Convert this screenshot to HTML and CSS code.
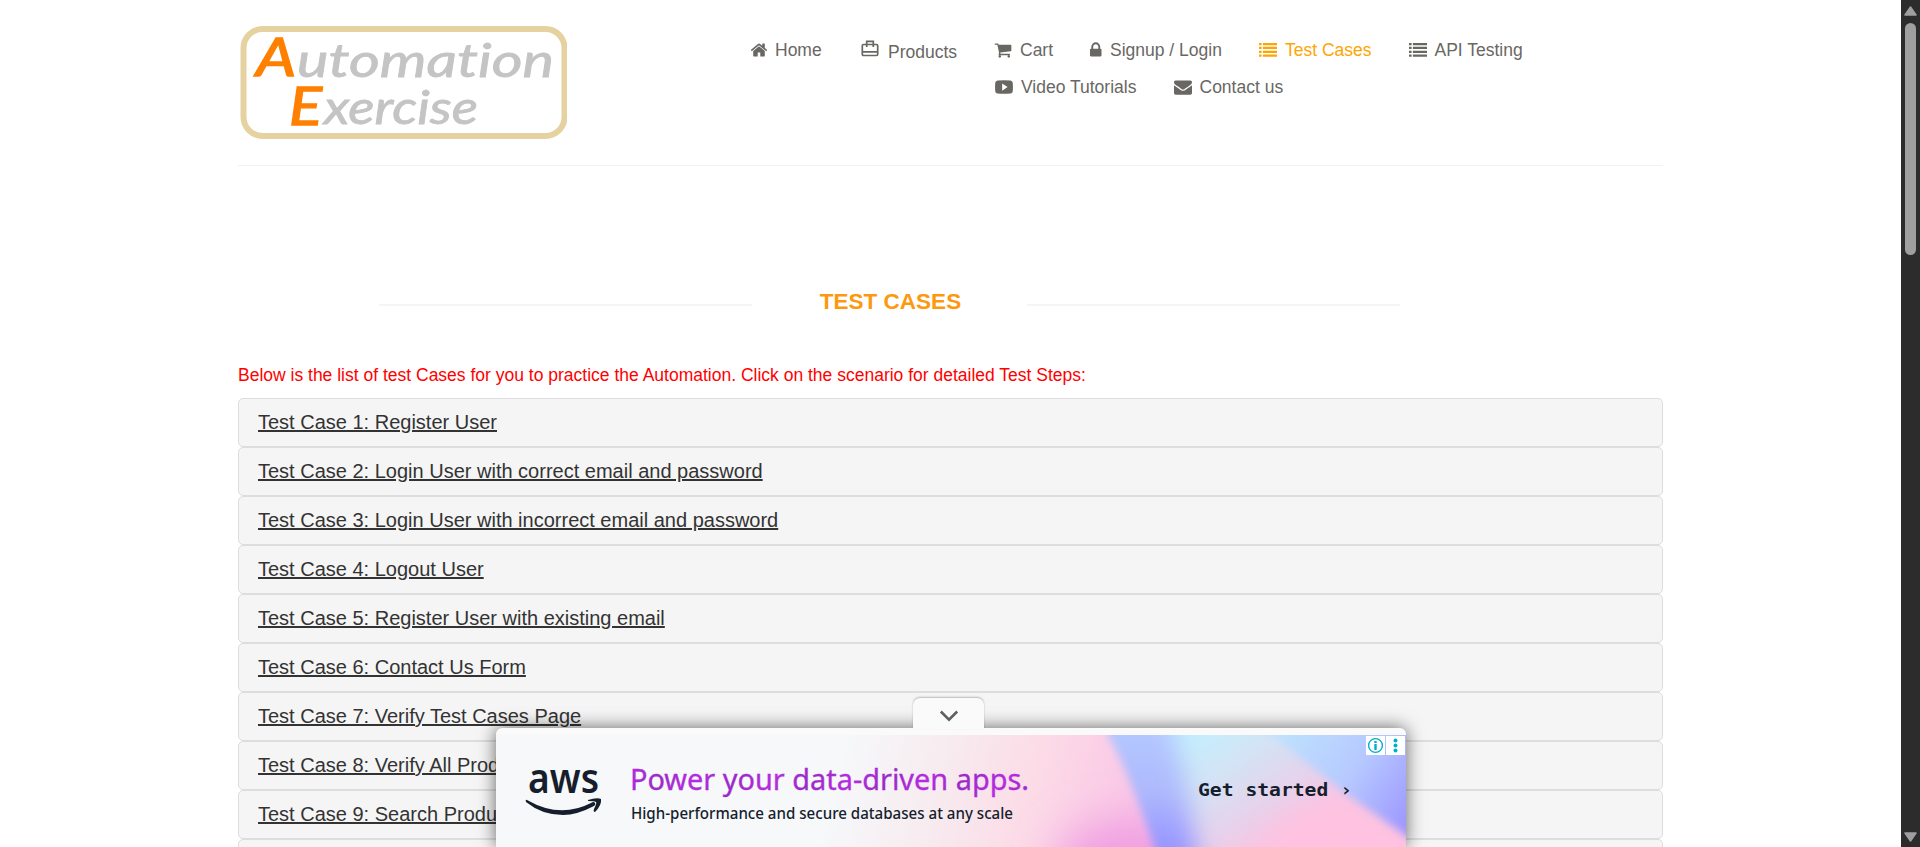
FILE: index.html
```html
<!DOCTYPE html>
<html lang="en">
<head>
<meta charset="utf-8">
<title>Automation Exercise - Test Cases</title>
<link rel="stylesheet" href="styles.css">
</head>
<body>
<svg width="0" height="0" class="defs">
  <symbol id="list" viewBox="0 0 1792 1792"><path d="M0 192h256v224H0zM0 576h256v224H0zM0 960h256v224H0zM0 1344h256v224H0zM384 192h1408v224H384zM384 576h1408v224H384zM384 960h1408v224H384zM384 1344h1408v224H384z"/></symbol>
</svg>
<div class="page">
  <div class="container">
    <header class="header">
      <svg class="logo" width="329" height="120" viewBox="0 0 329 120">
        <rect x="5.500" y="9" width="321" height="107" rx="19" fill="#fff" stroke="#e6d2a0" stroke-width="6"/>
        <g class="logo-text">
          <text class="cap" x="18" y="56" font-size="52" textLength="40" lengthAdjust="spacingAndGlyphs">A</text>
          <text x="59" y="57" font-size="47" textLength="257" lengthAdjust="spacingAndGlyphs">utomation</text>
          <text class="cap" x="51" y="105" font-size="52" textLength="33" lengthAdjust="spacingAndGlyphs">E</text>
          <text x="86" y="104" font-size="47" textLength="154" lengthAdjust="spacingAndGlyphs">xercise</text>
        </g>
      </svg>
      <nav class="nav">
        <ul class="row">
          <li class="home"><svg class="ico" viewBox="0 0 1792 1792"><path d="M1472 992v480q0 26-19 45t-45 19h-384v-384h-256v384h-384q-26 0-45-19t-19-45v-480q0-1 .5-3t.5-3l575-474 575 474q1 2 1 6zm223-69l-62 74q-8 9-21 11h-3q-13 0-21-7l-692-577-692 577q-12 8-24 7-13-2-21-11l-62-74q-8-10-7-23.500t11-21.500l719-599q32-26 76-26t76 26l244 204v-195q0-14 9-23t23-9h192q14 0 23 9t9 23v408l219 182q10 8 11 21.500t-7 23.500z"/></svg><span>Home</span></li>
          <li class="products"><svg class="bag" width="18" height="17" viewBox="0 0 18 17"><path d="M2.500 4.500h13q1.200 0 1.200 1.200v8.600q0 1.200-1.200 1.200h-13q-1.200 0-1.200-1.200V5.700q0-1.200 1.200-1.200zM1.300 11.800h15.400M5.700 7V1.300h6.600V7" fill="none" stroke="#696763" stroke-width="1.700"/></svg><span>Products</span></li>
          <li class="cart"><svg class="ico" viewBox="0 0 1792 1792"><path d="M704 1536q0 52-38 90t-90 38-90-38-38-90 38-90 90-38 90 38 38 90zm896 0q0 52-38 90t-90 38-90-38-38-90 38-90 90-38 90 38 38 90zm128-1088v512q0 24-16.500 42.500t-40.500 21.500l-1044 122q13 60 13 70 0 16-24 64h920q26 0 45 19t19 45-19 45-45 19h-1024q-26 0-45-19t-19-45q0-11 8-31.500t16-36 21.500-40 15.500-29.500l-177-823h-204q-26 0-45-19t-19-45 19-45 45-19h256q16 0 28.500 6.500t19.500 15.500 13 24.500 8 26 5.500 29.500 4.500 26h1201q26 0 45 19t19 45z"/></svg><span>Cart</span></li>
          <li class="login"><svg class="ico lock" viewBox="320 0 1152 1792"><path d="M640 768h512v-192q0-106-75-181t-181-75-181 75-75 181v192zm832 96v576q0 40-28 68t-68 28h-960q-40 0-68-28t-28-68v-576q0-40 28-68t68-28h32v-192q0-184 132-316t316-132 316 132 132 316v192h32q40 0 68 28t28 68z"/></svg><span>Signup / Login</span></li>
          <li class="cases"><svg class="ico"><use href="#list"/></svg><span>Test Cases</span></li>
          <li class="api"><svg class="ico"><use href="#list"/></svg><span>API Testing</span></li>
        </ul>
        <ul class="row second">
          <li class="video"><svg class="ico" viewBox="0 0 1792 1792"><path fill-rule="evenodd" d="M260 250Q896 200 1532 250Q1740 270 1765 480Q1810 896 1765 1312Q1740 1522 1532 1542Q896 1592 260 1542Q52 1522 27 1312Q-18 896 27 480Q52 270 260 250zM711 540v720l540-360z"/></svg><span>Video Tutorials</span></li>
          <li class="contact"><svg class="ico" viewBox="0 0 1792 1792"><path d="M1792 710v794q0 66-47 113t-113 47h-1472q-66 0-113-47t-47-113v-794q44 49 101 87 362 246 497 345 57 42 92.500 65.500t94.500 48 110 24.500h2q51 0 110-24.500t94.500-48 92.500-65.500q170-123 498-345 57-39 100-87zm0-294q0 79-49 151t-122 123q-376 261-468 325-10 7-42.500 31t-54 38.500-52 32.500-57.500 27-50 9h-2q-23 0-50-9t-57.500-27-52-32.500-54-38.500-42.500-31q-91-64-262-182.500t-205-142.500q-62-42-117-115.500t-55-136.500q0-78 41.500-130t118.500-52h1472q65 0 112.500 47t47.500 113z"/></svg><span>Contact us</span></li>
        </ul>
      </nav>
    </header>
    <div class="title"><i></i><h2>TEST CASES</h2><i></i></div>
    <p class="intro">Below is the list of test Cases for you to practice the Automation. Click on the scenario for detailed Test Steps:</p>
    <div class="panels">
      <div class="panel"><u>Test Case 1: Register User</u></div>
      <div class="panel"><u>Test Case 2: Login User with correct email and password</u></div>
      <div class="panel"><u>Test Case 3: Login User with incorrect email and password</u></div>
      <div class="panel"><u>Test Case 4: Logout User</u></div>
      <div class="panel"><u>Test Case 5: Register User with existing email</u></div>
      <div class="panel"><u>Test Case 6: Contact Us Form</u></div>
      <div class="panel"><u>Test Case 7: Verify Test Cases Page</u></div>
      <div class="panel"><u>Test Case 8: Verify All Products</u></div>
      <div class="panel"><u>Test Case 9: Search Product</u></div>
      <div class="panel"></div>
    </div>
  </div>
</div>

<aside class="ad">
  <div class="tab"><svg width="20" height="12" viewBox="0 0 20 12"><path d="M1.800 1.500L10 9.700l8.200-8.200" fill="none" stroke="#5f5f5f" stroke-width="2.600"/></svg></div>
  <svg class="banner" width="910" height="112" viewBox="0 0 910 112">
    <defs>
      <linearGradient id="base" gradientUnits="userSpaceOnUse" x1="350" y1="0" x2="640" y2="70">
        <stop offset="0" stop-color="#f6f8fa"/><stop offset=".35" stop-color="#f7ebef"/><stop offset=".65" stop-color="#fcdbe7"/><stop offset="1" stop-color="#fac6e6"/>
      </linearGradient>
      <linearGradient id="band" x1="0" y1="0" x2="0" y2="1"><stop offset=".1" stop-color="#b4c8ff"/><stop offset=".5" stop-color="#aeb9fd"/><stop offset=".85" stop-color="#9a98ff"/></linearGradient>
      <linearGradient id="ice" gradientUnits="userSpaceOnUse" x1="700" y1="0" x2="775" y2="110"><stop offset="0" stop-color="#c4effc"/><stop offset=".4" stop-color="#d6e1f4"/><stop offset=".75" stop-color="#e8d0ea"/><stop offset="1" stop-color="#fcc3e1"/></linearGradient>
      <linearGradient id="sky" gradientUnits="userSpaceOnUse" x1="780" y1="0" x2="915" y2="95"><stop offset="0" stop-color="#bfe2fd"/><stop offset=".5" stop-color="#b6caff"/><stop offset="1" stop-color="#9c94ff"/></linearGradient>
      <linearGradient id="violet" gradientUnits="userSpaceOnUse" x1="0" y1="0" x2="26" y2="18" spreadMethod="reflect"><stop offset="0" stop-color="#b52be0"/><stop offset="1" stop-color="#9a2bc8"/></linearGradient>
      <filter id="b4" x="-30%" y="-30%" width="160%" height="160%"><feGaussianBlur stdDeviation="4"/></filter>
      <filter id="b12" x="-50%" y="-50%" width="200%" height="200%"><feGaussianBlur stdDeviation="12"/></filter>
      <filter id="b20" x="-100%" y="-100%" width="300%" height="300%"><feGaussianBlur stdDeviation="22"/></filter>
    </defs>
    <rect width="910" height="112" fill="url(#base)"/>
    <ellipse cx="635" cy="130" rx="75" ry="45" fill="#f09ee2" filter="url(#b20)"/>
    <path d="M604 -20L612 0Q634 40 658 112L664 132H960V-20z" fill="url(#band)" filter="url(#b4)"/>
    <path d="M672 -25L688 40L704 140H960V-25z" fill="url(#ice)" filter="url(#b12)"/>
    <path d="M780 98Q800 78 830 75L930 100V140H770z" fill="#ffc2e0" filter="url(#b12)"/>
    <path d="M750 -20L775 0L850 59L915 104L940 120V-20z" fill="url(#sky)" filter="url(#b4)"/>
    <g fill="#161e2d">
      <text x="32" y="58" font-family="Noto Sans, sans-serif" font-size="42" font-weight="600" textLength="71" lengthAdjust="spacingAndGlyphs">aws</text>
      <path d="M31 65Q64 84 95 68Q98 66 99 68Q100 70 98 71Q81 80 67 80Q46 80 30 67Q29 64 31 65z"/>
      <path d="M92 65Q101 62 105 64Q106 70 99 77Q97 77 98 74Q101 68 100 67Q98 66 92 66z"/>
      <text x="135" y="84" font-family="Noto Sans, sans-serif" font-size="16.500" font-weight="500" textLength="382" lengthAdjust="spacingAndGlyphs">High-performance and secure databases at any scale</text>
      <text x="702" y="61" font-family="DejaVu Sans Mono, monospace" font-size="18" font-weight="700" textLength="154" lengthAdjust="spacingAndGlyphs">Get started ›</text>
    </g>
    <text x="134" y="55" font-family="Noto Sans, sans-serif" font-size="29" fill="url(#violet)" stroke="url(#violet)" stroke-width=".3" textLength="399" lengthAdjust="spacingAndGlyphs">Power your data-driven apps.</text>
    <path d="M870 1h19v19h-19zM890 1h19v19h-19z" fill="#fff"/>
    <g fill="#00aecd"><circle cx="879.500" cy="10.500" r="6.900" fill="none" stroke="#00aecd" stroke-width="1.400"/><path d="M878.300 6h2.400v2h-2.400zM878.300 9h2.400v6h-2.400z"/><circle cx="899.500" cy="5.500" r="2"/><circle cx="899.500" cy="10.500" r="2"/><circle cx="899.500" cy="15.500" r="2"/></g>
  </svg>
</aside>

<div class="scrollbar">
  <svg width="13" height="10" viewBox="0 0 13 10"><path d="M6.500 1L12 9H1z" fill="#9f9f9f" stroke="#9f9f9f" stroke-width="1.500" stroke-linejoin="round"/></svg>
  <div class="thumb"></div>
  <svg class="down" width="13" height="10" viewBox="0 0 13 10"><path d="M6.500 9L12 1H1z" fill="#9f9f9f" stroke="#9f9f9f" stroke-width="1.500" stroke-linejoin="round"/></svg>
</div>
</body>
</html>
```

FILE: styles.css
```css
* { box-sizing: border-box; }
html, body { height: 100%; overflow: hidden; }
body { margin: 0; background: #fff; font-family: "Liberation Sans", Arial, sans-serif; color: #333; }
.defs { position: absolute; }
.page { height: 847px; width: 1901px; overflow: hidden; }
.container { width: 1425px; margin-left: 238px; }
.header { display: flex; height: 166px; border-bottom: 1px solid #f2f2f2; }
.logo { display: block; margin-top: 20px; flex: none; }
.logo-text { font-family: Lato, sans-serif; font-style: italic; font-weight: 400; font-variant-ligatures: none; fill: #c4c4c4; stroke: #c4c4c4; stroke-width: .8px; }
.logo-text .cap { fill: #ff8000; stroke: #ff8000; stroke-width: 1.4px; }
.nav { margin: 32px 0 0 183px; font-size: 17.5px; color: #696763; }
.row { display: flex; list-style: none; margin: 0; padding: 0; height: 37px; }
.row.second { margin-left: 245px; }
.row li { display: flex; height: 36px; line-height: 36px; white-space: nowrap; flex: none; }
.ico { width: 18px; height: 18px; margin: 9px 8px 0 0; fill: currentColor; flex: none; }
.ico.lock { width: 11.5px; margin-right: 8.5px; }
.home { width: 110.5px; }
.home .ico { margin-right: 7px; }
.products { width: 134.5px; }
.products .bag { margin: 8px 9.5px 0 0; flex: none; }
.products span { padding-top: 2px; }
.cart { width: 95px; }
.cart .ico { margin-left: -1px; }
.login { width: 169px; }
.cases { width: 150px; color: orange; }
.api .ico { margin-right: 7.5px; }
.video { width: 178.5px; }
.title { display: flex; align-items: center; height: 40px; margin: 117px 0 0 141px; }
.title i { width: 373px; height: 2px; background: #f5f5f5; margin-top: 4px; }
.title h2 { margin: -2px 0 0; width: 275px; padding-left: 2px; text-align: center; font-size: 22.5px; line-height: 40px; color: #fe980f; }
.intro { margin: 40px 0 0; font-size: 17.5px; line-height: 25px; color: red; white-space: nowrap; }
.panels { margin-top: 10px; }
.panel { height: 49px; border: 1px solid #ddd; border-radius: 5px; background: #f5f5f5; padding: 12px 19px; font-size: 20px; line-height: 23px; white-space: nowrap; }
.panel u { text-decoration-thickness: 2px; }
.ad { position: absolute; left: 496px; top: 728px; width: 910px; height: 119px; padding-top: 7px; background: #fafafa; border-radius: 6px 6px 0 0; box-shadow: 0 0 18px rgba(0, 0, 0, .6); }
.banner { display: block; }
.tab { position: absolute; left: 417px; top: -30px; width: 71px; height: 31px; display: flex; justify-content: center; padding-top: 12px; background: #fafafa; border-radius: 7px 7px 0 0; box-shadow: 0 -1px 2px rgba(0, 0, 0, .25); }
.scrollbar { position: absolute; right: 0; top: 0; width: 19px; height: 847px; background: #2c2c2c; display: flex; flex-direction: column; align-items: center; padding: 6px 0 5px; }
.thumb { width: 11px; height: 232px; margin-top: 7px; border-radius: 6px; background: #9f9f9f; }
.down { margin-top: auto; }
```
